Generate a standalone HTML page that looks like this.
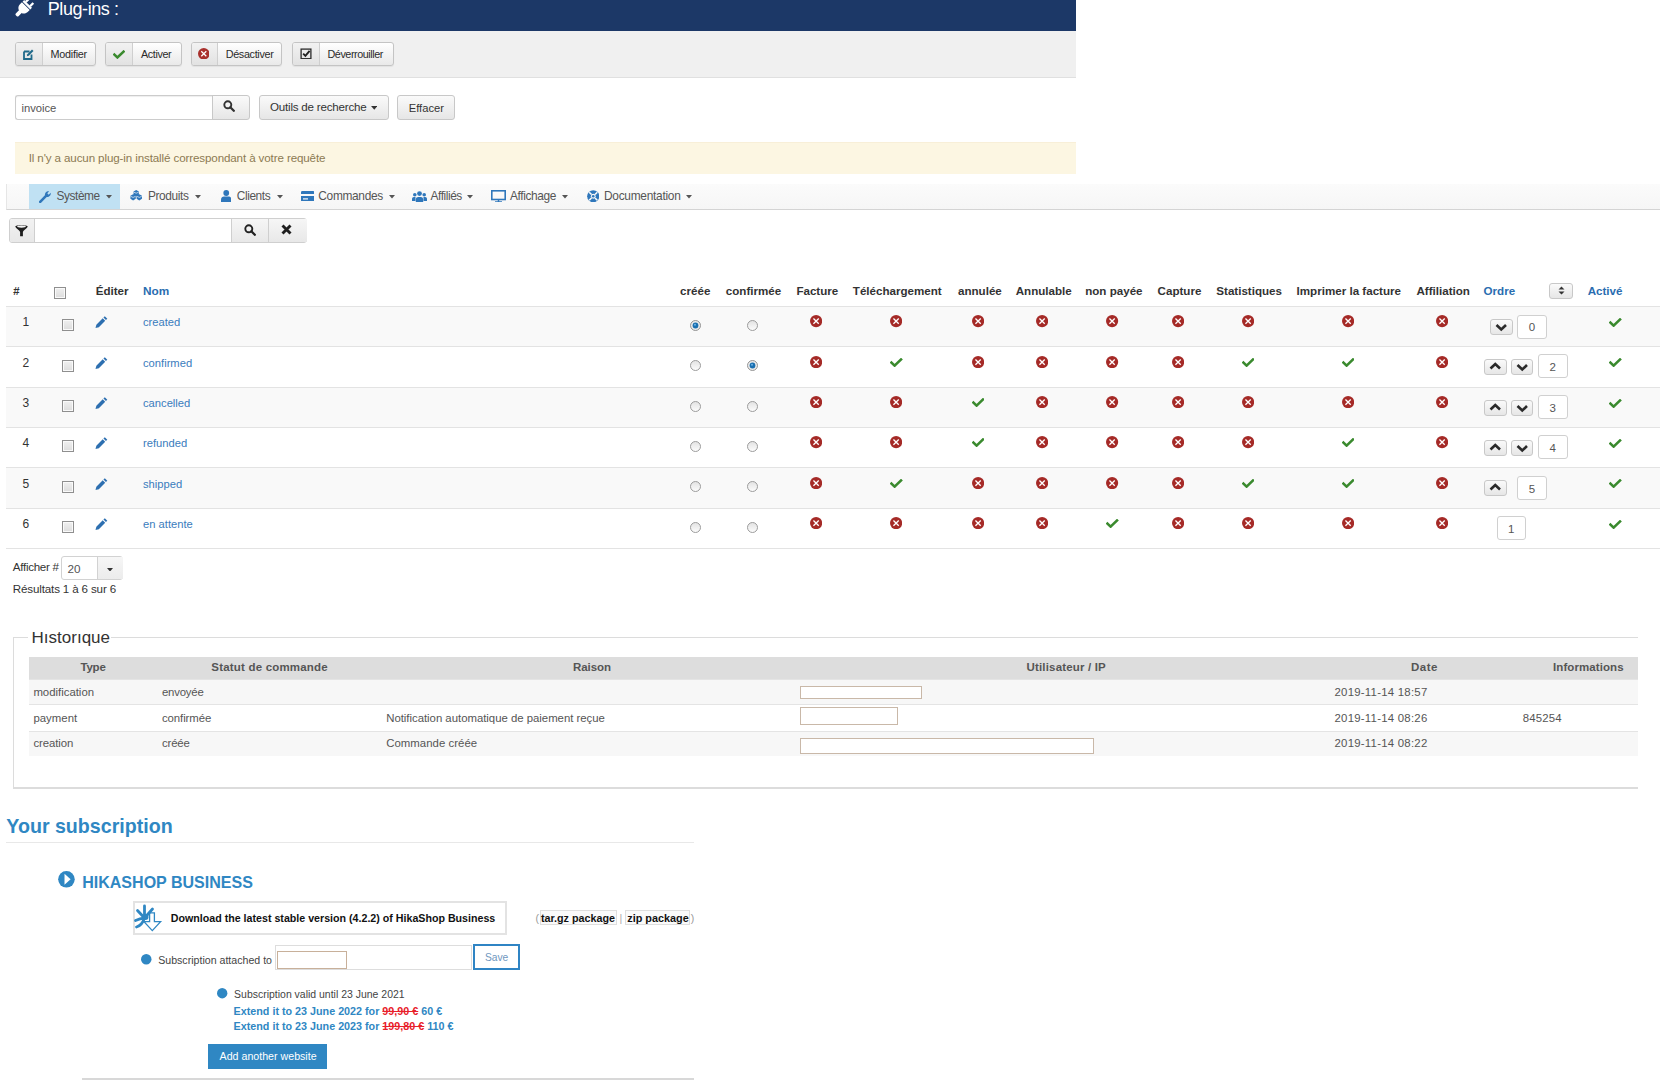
<!DOCTYPE html>
<html><head><meta charset="utf-8"><style>
html,body{margin:0;padding:0;background:#fff;width:1660px;height:1080px;overflow:hidden;position:relative}
body{font-family:"Liberation Sans",sans-serif}
.t{position:absolute;line-height:1;white-space:nowrap}
.b{position:absolute;display:block}
s{text-decoration:line-through}
</style></head><body>
<svg width="0" height="0" style="position:absolute"><defs><linearGradient id="rg" x1="0" y1="0" x2="0" y2="1"><stop offset="0" stop-color="#e2e2e2"/><stop offset="1" stop-color="#fdfdfd"/></linearGradient></defs></svg>
<div class="b" style="left:0.0px;top:0.0px;width:1076.0px;height:31.0px;background:#1c3867"></div>
<div class="b" style="left:0.0px;top:31.0px;width:1076.0px;height:47.0px;background:#f0f0f0;border-bottom:1px solid #e0e0e0;box-sizing:border-box"></div>
<div class="t" style="left:47.8px;top:0.0px;font-size:18px;color:#fff;letter-spacing:-0.429px;">Plug-ins :</div>
<svg class="b" style="left:0;top:0" width="40" height="30" viewBox="0 0 40 30"><g transform="translate(26.2,5.8) rotate(45)" fill="#fff"><rect x="-5.5" y="-2.6" width="11" height="2.2"/><rect x="-4.2" y="-7" width="2.3" height="4.6"/><rect x="1.9" y="-7" width="2.3" height="4.6"/><path d="M-5.5 0.5H5.5V3C5.5 6.8 2.8 8.6 0 8.6C-2.8 8.6 -5.5 6.8 -5.5 3Z"/><rect x="-1.9" y="7.5" width="3.8" height="6.5" rx="1.2"/></g></svg>
<div class="b" style="left:15.0px;top:42.0px;width:81.0px;height:24.0px;background:linear-gradient(#fff,#e9e9e9);border:1px solid #c4c4c4;border-radius:3px;box-sizing:border-box;box-shadow:0 1px 1px rgba(0,0,0,.06)"></div>
<div class="b" style="left:16.0px;top:43.0px;width:26.0px;height:22.0px;background:linear-gradient(#f2f2f2,#e2e2e2);border-right:1px solid #cfcfcf;border-radius:2px 0 0 2px"></div>
<div class="t" style="left:50.6px;top:49.0px;font-size:10.8px;color:#2b2b2b;letter-spacing:-0.256px;">Modifier</div>
<div class="b" style="left:105.0px;top:42.0px;width:76.5px;height:24.0px;background:linear-gradient(#fff,#e9e9e9);border:1px solid #c4c4c4;border-radius:3px;box-sizing:border-box;box-shadow:0 1px 1px rgba(0,0,0,.06)"></div>
<div class="b" style="left:106.0px;top:43.0px;width:25.6px;height:22.0px;background:linear-gradient(#f2f2f2,#e2e2e2);border-right:1px solid #cfcfcf;border-radius:2px 0 0 2px"></div>
<div class="t" style="left:141.0px;top:49.0px;font-size:10.8px;color:#2b2b2b;letter-spacing:-0.382px;">Activer</div>
<div class="b" style="left:191.0px;top:42.0px;width:91.0px;height:24.0px;background:linear-gradient(#fff,#e9e9e9);border:1px solid #c4c4c4;border-radius:3px;box-sizing:border-box;box-shadow:0 1px 1px rgba(0,0,0,.06)"></div>
<div class="b" style="left:192.0px;top:43.0px;width:25.0px;height:22.0px;background:linear-gradient(#f2f2f2,#e2e2e2);border-right:1px solid #cfcfcf;border-radius:2px 0 0 2px"></div>
<div class="t" style="left:225.7px;top:49.0px;font-size:10.8px;color:#2b2b2b;letter-spacing:-0.326px;">Désactiver</div>
<div class="b" style="left:292.0px;top:42.0px;width:101.5px;height:24.0px;background:linear-gradient(#fff,#e9e9e9);border:1px solid #c4c4c4;border-radius:3px;box-sizing:border-box;box-shadow:0 1px 1px rgba(0,0,0,.06)"></div>
<div class="b" style="left:293.0px;top:43.0px;width:25.5px;height:22.0px;background:linear-gradient(#f2f2f2,#e2e2e2);border-right:1px solid #cfcfcf;border-radius:2px 0 0 2px"></div>
<div class="t" style="left:327.5px;top:49.0px;font-size:10.8px;color:#2b2b2b;letter-spacing:-0.445px;">Déverrouiller</div>
<svg class="b" style="left:23.0px;top:48.5px;" width="11" height="11" viewBox="0 0 11 11"><path d="M1 2.5H6.5M1 2.5V10H8.5V5.5" fill="none" stroke="#206a8a" stroke-width="1.8"/><path d="M3.8 7.2L4.3 5.3L9 0.6L10.5 2.1L5.8 6.8Z" fill="#206a8a"/></svg>
<svg class="b" style="left:112.5px;top:49.5px;" width="12" height="9" viewBox="0 0 12.5 9"><path d="M1.5 4.6L4.6 7.6L11 1.5" fill="none" stroke="#3a8a2e" stroke-width="2.6" stroke-linejoin="miter" stroke-linecap="square"/></svg>
<svg class="b" style="left:197.8px;top:47.9px;" width="11.6" height="11.6" viewBox="0 0 12 12"><circle cx="6" cy="6" r="6" fill="#a8302c"/><path d="M3.4 3.4L8.6 8.6M8.6 3.4L3.4 8.6" stroke="#fff" stroke-width="1.3" stroke-linecap="butt"/></svg>
<svg class="b" style="left:299.5px;top:47.8px;" width="12" height="11.5" viewBox="0 0 12 11.5"><rect x="1.1" y="1.1" width="9.8" height="9.6" fill="none" stroke="#2a2a2a" stroke-width="1.3"/><path d="M3.2 5.6L5.4 7.8L9.6 2.8" fill="none" stroke="#222" stroke-width="1.9"/></svg>
<div class="b" style="left:15.0px;top:95.0px;width:198.0px;height:25.0px;background:#fff;border:1px solid #ccc;border-right:none;border-radius:3px 0 0 3px;box-sizing:border-box;box-shadow:inset 0 1px 1px rgba(0,0,0,.07)"></div>
<div class="t" style="left:21.4px;top:103.0px;font-size:11.24px;color:#555;">invoice</div>
<div class="b" style="left:212.0px;top:95.0px;width:37.6px;height:25.0px;background:linear-gradient(#fafafa,#e6e6e6);border:1px solid #c8c8c8;border-radius:3px;box-sizing:border-box;border-radius:0 3px 3px 0"></div>
<svg class="b" style="left:223.0px;top:100.3px;" width="12" height="12" viewBox="0 0 12 12"><circle cx="4.8" cy="4.8" r="3.5" fill="none" stroke="#333" stroke-width="1.9"/><path d="M7.3 7.3L10.8 10.8" stroke="#333" stroke-width="2.3" stroke-linecap="round"/></svg>
<div class="b" style="left:258.6px;top:94.5px;width:130.1px;height:25.0px;background:linear-gradient(#fafafa,#e6e6e6);border:1px solid #c8c8c8;border-radius:3px;box-sizing:border-box"></div>
<div class="t" style="left:270.0px;top:101.0px;font-size:11.6px;color:#333;letter-spacing:-0.215px;">Outils de recherche</div>
<svg class="b" style="left:370.5px;top:106.0px;" width="6.5" height="3.75" viewBox="0 0 6 3.5"><path d="M0 0H6L3 3.5Z" fill="#333"/></svg>
<div class="b" style="left:397.3px;top:95.0px;width:57.3px;height:24.5px;background:linear-gradient(#fafafa,#e6e6e6);border:1px solid #c8c8c8;border-radius:3px;box-sizing:border-box"></div>
<div class="t" style="left:408.7px;top:103.0px;font-size:11.2px;color:#333;">Effacer</div>
<div class="b" style="left:15.0px;top:142.0px;width:1061.0px;height:31.5px;background:#fcf6e2;border-top:1px solid #f8efd8;box-sizing:border-box"></div>
<div class="t" style="left:28.7px;top:152.0px;font-size:11.6px;color:#8c7a52;letter-spacing:-0.117px;">Il n'y a aucun plug-in installé correspondant à votre requête</div>
<div class="b" style="left:6.0px;top:183.5px;width:1654.0px;height:26.5px;background:linear-gradient(#fbfbfb,#f6f6f6);border-bottom:1px solid #d4d4d4;border-left:1px solid #e6e6e6;box-sizing:border-box"></div>
<div class="b" style="left:29.0px;top:184.0px;width:91.0px;height:25.0px;background:#c0e1f3"></div>
<div class="t" style="left:56.5px;top:191.0px;font-size:11.9px;color:#555;letter-spacing:-0.432px;">Système</div>
<svg class="b" style="left:105.5px;top:195.2px;" width="6" height="3.5" viewBox="0 0 6 3.5"><path d="M0 0H6L3 3.5Z" fill="#555"/></svg>
<div class="t" style="left:148.0px;top:191.0px;font-size:11.9px;color:#555;letter-spacing:-0.396px;">Produits</div>
<svg class="b" style="left:195.0px;top:195.2px;" width="6" height="3.5" viewBox="0 0 6 3.5"><path d="M0 0H6L3 3.5Z" fill="#555"/></svg>
<div class="t" style="left:236.8px;top:191.0px;font-size:11.9px;color:#555;letter-spacing:-0.426px;">Clients</div>
<svg class="b" style="left:276.5px;top:195.2px;" width="6" height="3.5" viewBox="0 0 6 3.5"><path d="M0 0H6L3 3.5Z" fill="#555"/></svg>
<div class="t" style="left:318.3px;top:191.0px;font-size:11.9px;color:#555;letter-spacing:-0.309px;">Commandes</div>
<svg class="b" style="left:389.0px;top:195.2px;" width="6" height="3.5" viewBox="0 0 6 3.5"><path d="M0 0H6L3 3.5Z" fill="#555"/></svg>
<div class="t" style="left:430.6px;top:191.0px;font-size:11.9px;color:#555;letter-spacing:-0.444px;">Affiliés</div>
<svg class="b" style="left:467.2px;top:195.2px;" width="6" height="3.5" viewBox="0 0 6 3.5"><path d="M0 0H6L3 3.5Z" fill="#555"/></svg>
<div class="t" style="left:510.0px;top:191.0px;font-size:11.9px;color:#555;letter-spacing:-0.373px;">Affichage</div>
<svg class="b" style="left:562.0px;top:195.2px;" width="6" height="3.5" viewBox="0 0 6 3.5"><path d="M0 0H6L3 3.5Z" fill="#555"/></svg>
<div class="t" style="left:604.0px;top:191.0px;font-size:11.9px;color:#555;letter-spacing:-0.269px;">Documentation</div>
<svg class="b" style="left:686.2px;top:195.2px;" width="6" height="3.5" viewBox="0 0 6 3.5"><path d="M0 0H6L3 3.5Z" fill="#555"/></svg>
<svg class="b" style="left:38.5px;top:189.5px;" width="13" height="13" viewBox="0 0 13 13"><path d="M1.2 11.8L6.8 6.2" stroke="#2f77bb" stroke-width="2.6" stroke-linecap="round"/><path d="M6 5.5C5.5 3.2 7.5 0.8 10.2 1.3L8.3 3.3L9.7 4.7L11.7 2.8C12.2 5.5 9.8 7.5 7.5 7Z" fill="#2f77bb"/></svg>
<svg class="b" style="left:130.3px;top:190.4px;" width="12.4" height="10.8" viewBox="0 0 12.4 10.8"><g fill="#2f77bb"><path d="M8.88 4.65 L6.20 6.20 L3.52 4.65 L3.52 1.55 L6.20 0.00 L8.88 1.55ZM5.78 8.85 L3.10 10.40 L0.42 8.85 L0.42 5.75 L3.10 4.20 L5.78 5.75ZM11.98 8.85 L9.30 10.40 L6.62 8.85 L6.62 5.75 L9.30 4.20 L11.98 5.75Z"/></g><g stroke="#f2f6fa" stroke-width="0.7" fill="none"><path d="M3.8 2.2L6.2 3.2L8.6 2.2M0.7 6.4L3.1 7.4L5.5 6.4M6.9 6.4L9.3 7.4L11.7 6.4"/></g></svg>
<svg class="b" style="left:220.5px;top:190.0px;" width="10.5" height="12" viewBox="0 0 10.5 12"><circle cx="5.25" cy="3" r="2.9" fill="#2f77bb"/><path d="M0 12V9.5C0 7.5 1.5 6.5 3 6.5H7.5C9 6.5 10.5 7.5 10.5 9.5V12Z" fill="#2f77bb"/></svg>
<svg class="b" style="left:300.5px;top:190.5px;" width="13.5" height="10.5" viewBox="0 0 13.5 10.5"><rect x="0" y="0" width="13.5" height="10.5" rx="1.3" fill="#2f77bb"/><rect x="0" y="3" width="13.5" height="2" fill="#f9f9f9"/><rect x="2" y="7.3" width="5" height="1.2" fill="#f9f9f9"/></svg>
<svg class="b" style="left:412.0px;top:190.5px;" width="15" height="11" viewBox="0 0 15 11"><g fill="#2f77bb"><circle cx="7.5" cy="2.6" r="2.4"/><path d="M3.8 11V8.5C3.8 6.8 5 6 6.2 6H8.8C10 6 11.2 6.8 11.2 8.5V11Z"/><circle cx="2.8" cy="3.8" r="1.8"/><path d="M0 10V8C0 6.7 0.8 6 1.8 6H3.5V10Z"/><circle cx="12.2" cy="3.8" r="1.8"/><path d="M15 10V8C15 6.7 14.2 6 13.2 6H11.5V10Z"/></g></svg>
<svg class="b" style="left:491.0px;top:189.5px;" width="15" height="12.5" viewBox="0 0 15 12.5"><rect x="0.8" y="0.8" width="13.4" height="8.7" fill="none" stroke="#2f77bb" stroke-width="1.6"/><path d="M4 12H11" stroke="#2f77bb" stroke-width="1.5"/><path d="M7.5 9.5V12" stroke="#2f77bb" stroke-width="1.5"/></svg>
<svg class="b" style="left:586.5px;top:189.8px;" width="12.5" height="12.5" viewBox="0 0 12.5 12.5"><circle cx="6.25" cy="6.25" r="6.1" fill="#2f77bb"/><circle cx="6.25" cy="6.25" r="2.4" fill="#f9f9f9"/><path d="M2.2 2.2L4.5 4.5M10.3 2.2L8 4.5M2.2 10.3L4.5 8M10.3 10.3L8 8" stroke="#f9f9f9" stroke-width="1.6"/><circle cx="6.25" cy="6.25" r="1.3" fill="#2f77bb"/></svg>
<div class="b" style="left:9.0px;top:218.0px;width:298.0px;height:25.0px;border:1px solid #cfcfcf;border-radius:3px;box-sizing:border-box;background:#fff"></div>
<div class="b" style="left:10.0px;top:219.0px;width:24.2px;height:23.0px;background:linear-gradient(#f2f2f2,#e8e8e8);border-right:1px solid #cfcfcf;border-radius:2px 0 0 2px"></div>
<svg class="b" style="left:14.5px;top:223.5px;" width="13" height="13" viewBox="0 0 13 13"><path d="M0.3 2.6C0.3 0.9 12.7 0.9 12.7 2.6C12.7 3.6 8 7 7.9 8V12.2H5.1V8C5 7 0.3 3.6 0.3 2.6Z" fill="#1e1e1e"/><ellipse cx="6.5" cy="2.6" rx="4.3" ry="1.1" fill="#f4f4f4"/></svg>
<div class="b" style="left:230.7px;top:219.0px;width:75.3px;height:23.0px;background:linear-gradient(#f6f6f6,#e8e8e8);border-left:1px solid #cfcfcf"></div>
<div class="b" style="left:268.0px;top:219.0px;width:1.0px;height:23.0px;background:#cfcfcf"></div>
<svg class="b" style="left:243.5px;top:224.0px;" width="12" height="12" viewBox="0 0 12 12"><circle cx="4.8" cy="4.8" r="3.5" fill="none" stroke="#222" stroke-width="1.9"/><path d="M7.3 7.3L10.8 10.8" stroke="#222" stroke-width="2.3" stroke-linecap="round"/></svg>
<svg class="b" style="left:280.5px;top:224.0px;" width="11" height="11" viewBox="0 0 11 11"><path d="M1.5 1.5L9.5 9.5M9.5 1.5L1.5 9.5" stroke="#1e1e1e" stroke-width="2.9"/></svg>
<div class="t" style="left:13.0px;top:286.0px;font-size:11.5px;color:#333;font-weight:bold;font-style:italic">#</div>
<div class="b" style="left:54.0px;top:287.2px;width:12.0px;height:12.0px;border:1px solid #8f8f8f;background:linear-gradient(#f0f0f0,#dcdcdc);box-sizing:border-box;box-shadow:inset 0 0 0 1px #fafafa"></div>
<div class="t" style="left:95.7px;top:285.0px;font-size:11.6px;color:#333;font-weight:bold;">Éditer</div>
<div class="t" style="left:143.0px;top:286.0px;font-size:11.8px;color:#2a6db0;font-weight:bold;">Nom</div>
<div class="t" style="left:680.1px;top:285.0px;font-size:11.6px;color:#333;font-weight:bold;">créée</div>
<div class="t" style="left:725.8px;top:285.0px;font-size:11.6px;color:#333;font-weight:bold;">confirmée</div>
<div class="t" style="left:796.4px;top:285.0px;font-size:11.6px;color:#333;font-weight:bold;">Facture</div>
<div class="t" style="left:852.8px;top:285.0px;font-size:11.6px;color:#333;font-weight:bold;">Téléchargement</div>
<div class="t" style="left:958.0px;top:285.0px;font-size:11.6px;color:#333;font-weight:bold;">annulée</div>
<div class="t" style="left:1015.7px;top:285.0px;font-size:11.6px;color:#333;font-weight:bold;">Annulable</div>
<div class="t" style="left:1085.2px;top:285.0px;font-size:11.6px;color:#333;font-weight:bold;">non payée</div>
<div class="t" style="left:1157.6px;top:285.0px;font-size:11.6px;color:#333;font-weight:bold;">Capture</div>
<div class="t" style="left:1216.3px;top:285.0px;font-size:11.6px;color:#333;font-weight:bold;">Statistiques</div>
<div class="t" style="left:1296.6px;top:285.0px;font-size:11.6px;color:#333;font-weight:bold;">Imprimer la facture</div>
<div class="t" style="left:1416.5px;top:285.0px;font-size:11.6px;color:#333;font-weight:bold;">Affiliation</div>
<div class="t" style="left:1483.6px;top:285.0px;font-size:11.6px;color:#2a6db0;font-weight:bold;">Ordre</div>
<div class="t" style="left:1587.7px;top:285.0px;font-size:11.6px;color:#2a6db0;font-weight:bold;">Activé</div>
<div class="b" style="left:1549.0px;top:283.0px;width:24.0px;height:15.5px;background:linear-gradient(#fafafa,#e6e6e6);border:1px solid #c8c8c8;border-radius:3px;box-sizing:border-box"></div>
<svg class="b" style="left:1557.5px;top:286.0px;" width="7" height="9" viewBox="0 0 7 9"><path d="M0.5 3.5L3.5 0.5L6.5 3.5ZM0.5 5.5L3.5 8.5L6.5 5.5Z" fill="#333"/></svg>
<div class="b" style="left:6.0px;top:306.0px;width:1654.0px;height:40.0px;background:#f9f9f9;border-top:1px solid #e3e3e3;box-sizing:border-box"></div>
<div class="t" style="left:-274.2px;width:600px;text-align:center;top:316.0px;font-size:12px;color:#333;">1</div>
<div class="b" style="left:62.0px;top:319.3px;width:12.0px;height:12.0px;border:1px solid #8f8f8f;background:linear-gradient(#f0f0f0,#dcdcdc);box-sizing:border-box;box-shadow:inset 0 0 0 1px #fafafa"></div>
<svg class="b" style="left:95.0px;top:316.3px;" width="12.5" height="12.5" viewBox="0 0 12 12"><path d="M0.5 11.5L1.3 8.3L7.4 2.2L9.8 4.6L3.7 10.7Z" fill="#2d6fb0"/><path d="M8.1 1.5L9.4 0.2L11.8 2.6L10.5 3.9Z" fill="#2d6fb0"/></svg>
<div class="t" style="left:143.0px;top:317.0px;font-size:11.2px;color:#3a7cbd;">created</div>
<svg class="b" style="left:689.9px;top:319.9px;" width="11" height="11" viewBox="0 0 11 11"><circle cx="5.5" cy="5.5" r="5" fill="#eaeaea" stroke="#8a8a8a" stroke-width="0.9"/><circle cx="5.5" cy="5.5" r="2.9" fill="#1a6fb0"/><circle cx="5" cy="4.8" r="1" fill="#6fb4e6"/></svg>
<svg class="b" style="left:747.0px;top:319.9px;" width="11" height="11" viewBox="0 0 11 11"><circle cx="5.5" cy="5.5" r="5" fill="url(#rg)" stroke="#9c9c9c" stroke-width="1"/></svg>
<svg class="b" style="left:809.7px;top:315.4px;" width="12.2" height="12.2" viewBox="0 0 12 12"><circle cx="6" cy="6" r="6" fill="#a52a27"/><path d="M3.4 3.4L8.6 8.6M8.6 3.4L3.4 8.6" stroke="#fff" stroke-width="1.3" stroke-linecap="butt"/></svg>
<svg class="b" style="left:890.1px;top:315.4px;" width="12.2" height="12.2" viewBox="0 0 12 12"><circle cx="6" cy="6" r="6" fill="#a52a27"/><path d="M3.4 3.4L8.6 8.6M8.6 3.4L3.4 8.6" stroke="#fff" stroke-width="1.3" stroke-linecap="butt"/></svg>
<svg class="b" style="left:972.0px;top:315.4px;" width="12.2" height="12.2" viewBox="0 0 12 12"><circle cx="6" cy="6" r="6" fill="#a52a27"/><path d="M3.4 3.4L8.6 8.6M8.6 3.4L3.4 8.6" stroke="#fff" stroke-width="1.3" stroke-linecap="butt"/></svg>
<svg class="b" style="left:1035.6px;top:315.4px;" width="12.2" height="12.2" viewBox="0 0 12 12"><circle cx="6" cy="6" r="6" fill="#a52a27"/><path d="M3.4 3.4L8.6 8.6M8.6 3.4L3.4 8.6" stroke="#fff" stroke-width="1.3" stroke-linecap="butt"/></svg>
<svg class="b" style="left:1106.4px;top:315.4px;" width="12.2" height="12.2" viewBox="0 0 12 12"><circle cx="6" cy="6" r="6" fill="#a52a27"/><path d="M3.4 3.4L8.6 8.6M8.6 3.4L3.4 8.6" stroke="#fff" stroke-width="1.3" stroke-linecap="butt"/></svg>
<svg class="b" style="left:1171.7px;top:315.4px;" width="12.2" height="12.2" viewBox="0 0 12 12"><circle cx="6" cy="6" r="6" fill="#a52a27"/><path d="M3.4 3.4L8.6 8.6M8.6 3.4L3.4 8.6" stroke="#fff" stroke-width="1.3" stroke-linecap="butt"/></svg>
<svg class="b" style="left:1241.6px;top:315.4px;" width="12.2" height="12.2" viewBox="0 0 12 12"><circle cx="6" cy="6" r="6" fill="#a52a27"/><path d="M3.4 3.4L8.6 8.6M8.6 3.4L3.4 8.6" stroke="#fff" stroke-width="1.3" stroke-linecap="butt"/></svg>
<svg class="b" style="left:1341.9px;top:315.4px;" width="12.2" height="12.2" viewBox="0 0 12 12"><circle cx="6" cy="6" r="6" fill="#a52a27"/><path d="M3.4 3.4L8.6 8.6M8.6 3.4L3.4 8.6" stroke="#fff" stroke-width="1.3" stroke-linecap="butt"/></svg>
<svg class="b" style="left:1435.5px;top:315.4px;" width="12.2" height="12.2" viewBox="0 0 12 12"><circle cx="6" cy="6" r="6" fill="#a52a27"/><path d="M3.4 3.4L8.6 8.6M8.6 3.4L3.4 8.6" stroke="#fff" stroke-width="1.3" stroke-linecap="butt"/></svg>
<svg class="b" style="left:1609.0px;top:318.0px;" width="12.5" height="9" viewBox="0 0 12.5 9"><path d="M1.5 4.6L4.6 7.6L11 1.5" fill="none" stroke="#3a8a2e" stroke-width="2.6" stroke-linejoin="miter" stroke-linecap="square"/></svg>
<div class="b" style="left:1490.2px;top:318.5px;width:22.5px;height:16.0px;background:linear-gradient(#fafafa,#e6e6e6);border:1px solid #c8c8c8;border-radius:3px;box-sizing:border-box"></div>
<svg class="b" style="left:1490.2px;top:318.5px;" width="22.5" height="16" viewBox="0 0 22.5 16"><path d="M6.5 6L11.25 10.5L16 6" fill="none" stroke="#2a2a2a" stroke-width="2.6"/></svg>
<div class="b" style="left:1517.3px;top:314.5px;width:29.5px;height:24.0px;background:#fff;border:1px solid #d0d0d0;border-radius:3px;box-sizing:border-box"></div>
<div class="t" style="left:1232.0px;width:600px;text-align:center;top:322.0px;font-size:11.5px;color:#555;">0</div>
<div class="b" style="left:6.0px;top:346.0px;width:1654.0px;height:41.0px;background:#fff;border-top:1px solid #e3e3e3;box-sizing:border-box"></div>
<div class="t" style="left:-274.2px;width:600px;text-align:center;top:357.0px;font-size:12px;color:#333;">2</div>
<div class="b" style="left:62.0px;top:359.6px;width:12.0px;height:12.0px;border:1px solid #8f8f8f;background:linear-gradient(#f0f0f0,#dcdcdc);box-sizing:border-box;box-shadow:inset 0 0 0 1px #fafafa"></div>
<svg class="b" style="left:95.0px;top:356.6px;" width="12.5" height="12.5" viewBox="0 0 12 12"><path d="M0.5 11.5L1.3 8.3L7.4 2.2L9.8 4.6L3.7 10.7Z" fill="#2d6fb0"/><path d="M8.1 1.5L9.4 0.2L11.8 2.6L10.5 3.9Z" fill="#2d6fb0"/></svg>
<div class="t" style="left:143.0px;top:358.0px;font-size:11.2px;color:#3a7cbd;">confirmed</div>
<svg class="b" style="left:689.9px;top:360.2px;" width="11" height="11" viewBox="0 0 11 11"><circle cx="5.5" cy="5.5" r="5" fill="url(#rg)" stroke="#9c9c9c" stroke-width="1"/></svg>
<svg class="b" style="left:747.0px;top:360.2px;" width="11" height="11" viewBox="0 0 11 11"><circle cx="5.5" cy="5.5" r="5" fill="#eaeaea" stroke="#8a8a8a" stroke-width="0.9"/><circle cx="5.5" cy="5.5" r="2.9" fill="#1a6fb0"/><circle cx="5" cy="4.8" r="1" fill="#6fb4e6"/></svg>
<svg class="b" style="left:809.7px;top:355.7px;" width="12.2" height="12.2" viewBox="0 0 12 12"><circle cx="6" cy="6" r="6" fill="#a52a27"/><path d="M3.4 3.4L8.6 8.6M8.6 3.4L3.4 8.6" stroke="#fff" stroke-width="1.3" stroke-linecap="butt"/></svg>
<svg class="b" style="left:890.0px;top:357.5px;" width="12.5" height="9" viewBox="0 0 12.5 9"><path d="M1.5 4.6L4.6 7.6L11 1.5" fill="none" stroke="#3a8a2e" stroke-width="2.6" stroke-linejoin="miter" stroke-linecap="square"/></svg>
<svg class="b" style="left:972.0px;top:355.7px;" width="12.2" height="12.2" viewBox="0 0 12 12"><circle cx="6" cy="6" r="6" fill="#a52a27"/><path d="M3.4 3.4L8.6 8.6M8.6 3.4L3.4 8.6" stroke="#fff" stroke-width="1.3" stroke-linecap="butt"/></svg>
<svg class="b" style="left:1035.6px;top:355.7px;" width="12.2" height="12.2" viewBox="0 0 12 12"><circle cx="6" cy="6" r="6" fill="#a52a27"/><path d="M3.4 3.4L8.6 8.6M8.6 3.4L3.4 8.6" stroke="#fff" stroke-width="1.3" stroke-linecap="butt"/></svg>
<svg class="b" style="left:1106.4px;top:355.7px;" width="12.2" height="12.2" viewBox="0 0 12 12"><circle cx="6" cy="6" r="6" fill="#a52a27"/><path d="M3.4 3.4L8.6 8.6M8.6 3.4L3.4 8.6" stroke="#fff" stroke-width="1.3" stroke-linecap="butt"/></svg>
<svg class="b" style="left:1171.7px;top:355.7px;" width="12.2" height="12.2" viewBox="0 0 12 12"><circle cx="6" cy="6" r="6" fill="#a52a27"/><path d="M3.4 3.4L8.6 8.6M8.6 3.4L3.4 8.6" stroke="#fff" stroke-width="1.3" stroke-linecap="butt"/></svg>
<svg class="b" style="left:1241.5px;top:357.5px;" width="12.5" height="9" viewBox="0 0 12.5 9"><path d="M1.5 4.6L4.6 7.6L11 1.5" fill="none" stroke="#3a8a2e" stroke-width="2.6" stroke-linejoin="miter" stroke-linecap="square"/></svg>
<svg class="b" style="left:1341.8px;top:357.5px;" width="12.5" height="9" viewBox="0 0 12.5 9"><path d="M1.5 4.6L4.6 7.6L11 1.5" fill="none" stroke="#3a8a2e" stroke-width="2.6" stroke-linejoin="miter" stroke-linecap="square"/></svg>
<svg class="b" style="left:1435.5px;top:355.7px;" width="12.2" height="12.2" viewBox="0 0 12 12"><circle cx="6" cy="6" r="6" fill="#a52a27"/><path d="M3.4 3.4L8.6 8.6M8.6 3.4L3.4 8.6" stroke="#fff" stroke-width="1.3" stroke-linecap="butt"/></svg>
<svg class="b" style="left:1609.0px;top:358.3px;" width="12.5" height="9" viewBox="0 0 12.5 9"><path d="M1.5 4.6L4.6 7.6L11 1.5" fill="none" stroke="#3a8a2e" stroke-width="2.6" stroke-linejoin="miter" stroke-linecap="square"/></svg>
<div class="b" style="left:1484.0px;top:359.4px;width:22.5px;height:16.0px;background:linear-gradient(#fafafa,#e6e6e6);border:1px solid #c8c8c8;border-radius:3px;box-sizing:border-box"></div>
<svg class="b" style="left:1484.0px;top:359.4px;" width="22.5" height="16" viewBox="0 0 22.5 16"><path d="M6.5 9.5L11.25 5L16 9.5" fill="none" stroke="#2a2a2a" stroke-width="2.6"/></svg>
<div class="b" style="left:1510.9px;top:359.4px;width:22.5px;height:16.0px;background:linear-gradient(#fafafa,#e6e6e6);border:1px solid #c8c8c8;border-radius:3px;box-sizing:border-box"></div>
<svg class="b" style="left:1510.9px;top:359.4px;" width="22.5" height="16" viewBox="0 0 22.5 16"><path d="M6.5 6L11.25 10.5L16 6" fill="none" stroke="#2a2a2a" stroke-width="2.6"/></svg>
<div class="b" style="left:1538.1px;top:354.3px;width:29.5px;height:24.0px;background:#fff;border:1px solid #d0d0d0;border-radius:3px;box-sizing:border-box"></div>
<div class="t" style="left:1252.8px;width:600px;text-align:center;top:362.0px;font-size:11.5px;color:#555;">2</div>
<div class="b" style="left:6.0px;top:387.0px;width:1654.0px;height:40.0px;background:#f9f9f9;border-top:1px solid #e3e3e3;box-sizing:border-box"></div>
<div class="t" style="left:-274.2px;width:600px;text-align:center;top:397.0px;font-size:12px;color:#333;">3</div>
<div class="b" style="left:62.0px;top:400.0px;width:12.0px;height:12.0px;border:1px solid #8f8f8f;background:linear-gradient(#f0f0f0,#dcdcdc);box-sizing:border-box;box-shadow:inset 0 0 0 1px #fafafa"></div>
<svg class="b" style="left:95.0px;top:397.0px;" width="12.5" height="12.5" viewBox="0 0 12 12"><path d="M0.5 11.5L1.3 8.3L7.4 2.2L9.8 4.6L3.7 10.7Z" fill="#2d6fb0"/><path d="M8.1 1.5L9.4 0.2L11.8 2.6L10.5 3.9Z" fill="#2d6fb0"/></svg>
<div class="t" style="left:143.0px;top:398.0px;font-size:11.2px;color:#3a7cbd;">cancelled</div>
<svg class="b" style="left:689.9px;top:400.6px;" width="11" height="11" viewBox="0 0 11 11"><circle cx="5.5" cy="5.5" r="5" fill="url(#rg)" stroke="#9c9c9c" stroke-width="1"/></svg>
<svg class="b" style="left:747.0px;top:400.6px;" width="11" height="11" viewBox="0 0 11 11"><circle cx="5.5" cy="5.5" r="5" fill="url(#rg)" stroke="#9c9c9c" stroke-width="1"/></svg>
<svg class="b" style="left:809.7px;top:396.1px;" width="12.2" height="12.2" viewBox="0 0 12 12"><circle cx="6" cy="6" r="6" fill="#a52a27"/><path d="M3.4 3.4L8.6 8.6M8.6 3.4L3.4 8.6" stroke="#fff" stroke-width="1.3" stroke-linecap="butt"/></svg>
<svg class="b" style="left:890.1px;top:396.1px;" width="12.2" height="12.2" viewBox="0 0 12 12"><circle cx="6" cy="6" r="6" fill="#a52a27"/><path d="M3.4 3.4L8.6 8.6M8.6 3.4L3.4 8.6" stroke="#fff" stroke-width="1.3" stroke-linecap="butt"/></svg>
<svg class="b" style="left:971.9px;top:397.9px;" width="12.5" height="9" viewBox="0 0 12.5 9"><path d="M1.5 4.6L4.6 7.6L11 1.5" fill="none" stroke="#3a8a2e" stroke-width="2.6" stroke-linejoin="miter" stroke-linecap="square"/></svg>
<svg class="b" style="left:1035.6px;top:396.1px;" width="12.2" height="12.2" viewBox="0 0 12 12"><circle cx="6" cy="6" r="6" fill="#a52a27"/><path d="M3.4 3.4L8.6 8.6M8.6 3.4L3.4 8.6" stroke="#fff" stroke-width="1.3" stroke-linecap="butt"/></svg>
<svg class="b" style="left:1106.4px;top:396.1px;" width="12.2" height="12.2" viewBox="0 0 12 12"><circle cx="6" cy="6" r="6" fill="#a52a27"/><path d="M3.4 3.4L8.6 8.6M8.6 3.4L3.4 8.6" stroke="#fff" stroke-width="1.3" stroke-linecap="butt"/></svg>
<svg class="b" style="left:1171.7px;top:396.1px;" width="12.2" height="12.2" viewBox="0 0 12 12"><circle cx="6" cy="6" r="6" fill="#a52a27"/><path d="M3.4 3.4L8.6 8.6M8.6 3.4L3.4 8.6" stroke="#fff" stroke-width="1.3" stroke-linecap="butt"/></svg>
<svg class="b" style="left:1241.6px;top:396.1px;" width="12.2" height="12.2" viewBox="0 0 12 12"><circle cx="6" cy="6" r="6" fill="#a52a27"/><path d="M3.4 3.4L8.6 8.6M8.6 3.4L3.4 8.6" stroke="#fff" stroke-width="1.3" stroke-linecap="butt"/></svg>
<svg class="b" style="left:1341.9px;top:396.1px;" width="12.2" height="12.2" viewBox="0 0 12 12"><circle cx="6" cy="6" r="6" fill="#a52a27"/><path d="M3.4 3.4L8.6 8.6M8.6 3.4L3.4 8.6" stroke="#fff" stroke-width="1.3" stroke-linecap="butt"/></svg>
<svg class="b" style="left:1435.5px;top:396.1px;" width="12.2" height="12.2" viewBox="0 0 12 12"><circle cx="6" cy="6" r="6" fill="#a52a27"/><path d="M3.4 3.4L8.6 8.6M8.6 3.4L3.4 8.6" stroke="#fff" stroke-width="1.3" stroke-linecap="butt"/></svg>
<svg class="b" style="left:1609.0px;top:398.7px;" width="12.5" height="9" viewBox="0 0 12.5 9"><path d="M1.5 4.6L4.6 7.6L11 1.5" fill="none" stroke="#3a8a2e" stroke-width="2.6" stroke-linejoin="miter" stroke-linecap="square"/></svg>
<div class="b" style="left:1484.0px;top:399.8px;width:22.5px;height:16.0px;background:linear-gradient(#fafafa,#e6e6e6);border:1px solid #c8c8c8;border-radius:3px;box-sizing:border-box"></div>
<svg class="b" style="left:1484.0px;top:399.8px;" width="22.5" height="16" viewBox="0 0 22.5 16"><path d="M6.5 9.5L11.25 5L16 9.5" fill="none" stroke="#2a2a2a" stroke-width="2.6"/></svg>
<div class="b" style="left:1510.9px;top:399.8px;width:22.5px;height:16.0px;background:linear-gradient(#fafafa,#e6e6e6);border:1px solid #c8c8c8;border-radius:3px;box-sizing:border-box"></div>
<svg class="b" style="left:1510.9px;top:399.8px;" width="22.5" height="16" viewBox="0 0 22.5 16"><path d="M6.5 6L11.25 10.5L16 6" fill="none" stroke="#2a2a2a" stroke-width="2.6"/></svg>
<div class="b" style="left:1538.1px;top:394.7px;width:29.5px;height:24.0px;background:#fff;border:1px solid #d0d0d0;border-radius:3px;box-sizing:border-box"></div>
<div class="t" style="left:1252.8px;width:600px;text-align:center;top:403.0px;font-size:11.5px;color:#555;">3</div>
<div class="b" style="left:6.0px;top:427.0px;width:1654.0px;height:40.0px;background:#fff;border-top:1px solid #e3e3e3;box-sizing:border-box"></div>
<div class="t" style="left:-274.2px;width:600px;text-align:center;top:437.0px;font-size:12px;color:#333;">4</div>
<div class="b" style="left:62.0px;top:440.3px;width:12.0px;height:12.0px;border:1px solid #8f8f8f;background:linear-gradient(#f0f0f0,#dcdcdc);box-sizing:border-box;box-shadow:inset 0 0 0 1px #fafafa"></div>
<svg class="b" style="left:95.0px;top:437.3px;" width="12.5" height="12.5" viewBox="0 0 12 12"><path d="M0.5 11.5L1.3 8.3L7.4 2.2L9.8 4.6L3.7 10.7Z" fill="#2d6fb0"/><path d="M8.1 1.5L9.4 0.2L11.8 2.6L10.5 3.9Z" fill="#2d6fb0"/></svg>
<div class="t" style="left:143.0px;top:438.0px;font-size:11.2px;color:#3a7cbd;">refunded</div>
<svg class="b" style="left:689.9px;top:440.9px;" width="11" height="11" viewBox="0 0 11 11"><circle cx="5.5" cy="5.5" r="5" fill="url(#rg)" stroke="#9c9c9c" stroke-width="1"/></svg>
<svg class="b" style="left:747.0px;top:440.9px;" width="11" height="11" viewBox="0 0 11 11"><circle cx="5.5" cy="5.5" r="5" fill="url(#rg)" stroke="#9c9c9c" stroke-width="1"/></svg>
<svg class="b" style="left:809.7px;top:436.4px;" width="12.2" height="12.2" viewBox="0 0 12 12"><circle cx="6" cy="6" r="6" fill="#a52a27"/><path d="M3.4 3.4L8.6 8.6M8.6 3.4L3.4 8.6" stroke="#fff" stroke-width="1.3" stroke-linecap="butt"/></svg>
<svg class="b" style="left:890.1px;top:436.4px;" width="12.2" height="12.2" viewBox="0 0 12 12"><circle cx="6" cy="6" r="6" fill="#a52a27"/><path d="M3.4 3.4L8.6 8.6M8.6 3.4L3.4 8.6" stroke="#fff" stroke-width="1.3" stroke-linecap="butt"/></svg>
<svg class="b" style="left:971.9px;top:438.2px;" width="12.5" height="9" viewBox="0 0 12.5 9"><path d="M1.5 4.6L4.6 7.6L11 1.5" fill="none" stroke="#3a8a2e" stroke-width="2.6" stroke-linejoin="miter" stroke-linecap="square"/></svg>
<svg class="b" style="left:1035.6px;top:436.4px;" width="12.2" height="12.2" viewBox="0 0 12 12"><circle cx="6" cy="6" r="6" fill="#a52a27"/><path d="M3.4 3.4L8.6 8.6M8.6 3.4L3.4 8.6" stroke="#fff" stroke-width="1.3" stroke-linecap="butt"/></svg>
<svg class="b" style="left:1106.4px;top:436.4px;" width="12.2" height="12.2" viewBox="0 0 12 12"><circle cx="6" cy="6" r="6" fill="#a52a27"/><path d="M3.4 3.4L8.6 8.6M8.6 3.4L3.4 8.6" stroke="#fff" stroke-width="1.3" stroke-linecap="butt"/></svg>
<svg class="b" style="left:1171.7px;top:436.4px;" width="12.2" height="12.2" viewBox="0 0 12 12"><circle cx="6" cy="6" r="6" fill="#a52a27"/><path d="M3.4 3.4L8.6 8.6M8.6 3.4L3.4 8.6" stroke="#fff" stroke-width="1.3" stroke-linecap="butt"/></svg>
<svg class="b" style="left:1241.6px;top:436.4px;" width="12.2" height="12.2" viewBox="0 0 12 12"><circle cx="6" cy="6" r="6" fill="#a52a27"/><path d="M3.4 3.4L8.6 8.6M8.6 3.4L3.4 8.6" stroke="#fff" stroke-width="1.3" stroke-linecap="butt"/></svg>
<svg class="b" style="left:1341.8px;top:438.2px;" width="12.5" height="9" viewBox="0 0 12.5 9"><path d="M1.5 4.6L4.6 7.6L11 1.5" fill="none" stroke="#3a8a2e" stroke-width="2.6" stroke-linejoin="miter" stroke-linecap="square"/></svg>
<svg class="b" style="left:1435.5px;top:436.4px;" width="12.2" height="12.2" viewBox="0 0 12 12"><circle cx="6" cy="6" r="6" fill="#a52a27"/><path d="M3.4 3.4L8.6 8.6M8.6 3.4L3.4 8.6" stroke="#fff" stroke-width="1.3" stroke-linecap="butt"/></svg>
<svg class="b" style="left:1609.0px;top:439.0px;" width="12.5" height="9" viewBox="0 0 12.5 9"><path d="M1.5 4.6L4.6 7.6L11 1.5" fill="none" stroke="#3a8a2e" stroke-width="2.6" stroke-linejoin="miter" stroke-linecap="square"/></svg>
<div class="b" style="left:1484.0px;top:440.1px;width:22.5px;height:16.0px;background:linear-gradient(#fafafa,#e6e6e6);border:1px solid #c8c8c8;border-radius:3px;box-sizing:border-box"></div>
<svg class="b" style="left:1484.0px;top:440.1px;" width="22.5" height="16" viewBox="0 0 22.5 16"><path d="M6.5 9.5L11.25 5L16 9.5" fill="none" stroke="#2a2a2a" stroke-width="2.6"/></svg>
<div class="b" style="left:1510.9px;top:440.1px;width:22.5px;height:16.0px;background:linear-gradient(#fafafa,#e6e6e6);border:1px solid #c8c8c8;border-radius:3px;box-sizing:border-box"></div>
<svg class="b" style="left:1510.9px;top:440.1px;" width="22.5" height="16" viewBox="0 0 22.5 16"><path d="M6.5 6L11.25 10.5L16 6" fill="none" stroke="#2a2a2a" stroke-width="2.6"/></svg>
<div class="b" style="left:1538.1px;top:435.0px;width:29.5px;height:24.0px;background:#fff;border:1px solid #d0d0d0;border-radius:3px;box-sizing:border-box"></div>
<div class="t" style="left:1252.8px;width:600px;text-align:center;top:443.0px;font-size:11.5px;color:#555;">4</div>
<div class="b" style="left:6.0px;top:467.0px;width:1654.0px;height:41.0px;background:#f9f9f9;border-top:1px solid #e3e3e3;box-sizing:border-box"></div>
<div class="t" style="left:-274.2px;width:600px;text-align:center;top:478.0px;font-size:12px;color:#333;">5</div>
<div class="b" style="left:62.0px;top:480.6px;width:12.0px;height:12.0px;border:1px solid #8f8f8f;background:linear-gradient(#f0f0f0,#dcdcdc);box-sizing:border-box;box-shadow:inset 0 0 0 1px #fafafa"></div>
<svg class="b" style="left:95.0px;top:477.6px;" width="12.5" height="12.5" viewBox="0 0 12 12"><path d="M0.5 11.5L1.3 8.3L7.4 2.2L9.8 4.6L3.7 10.7Z" fill="#2d6fb0"/><path d="M8.1 1.5L9.4 0.2L11.8 2.6L10.5 3.9Z" fill="#2d6fb0"/></svg>
<div class="t" style="left:143.0px;top:479.0px;font-size:11.2px;color:#3a7cbd;">shipped</div>
<svg class="b" style="left:689.9px;top:481.2px;" width="11" height="11" viewBox="0 0 11 11"><circle cx="5.5" cy="5.5" r="5" fill="url(#rg)" stroke="#9c9c9c" stroke-width="1"/></svg>
<svg class="b" style="left:747.0px;top:481.2px;" width="11" height="11" viewBox="0 0 11 11"><circle cx="5.5" cy="5.5" r="5" fill="url(#rg)" stroke="#9c9c9c" stroke-width="1"/></svg>
<svg class="b" style="left:809.7px;top:476.7px;" width="12.2" height="12.2" viewBox="0 0 12 12"><circle cx="6" cy="6" r="6" fill="#a52a27"/><path d="M3.4 3.4L8.6 8.6M8.6 3.4L3.4 8.6" stroke="#fff" stroke-width="1.3" stroke-linecap="butt"/></svg>
<svg class="b" style="left:890.0px;top:478.5px;" width="12.5" height="9" viewBox="0 0 12.5 9"><path d="M1.5 4.6L4.6 7.6L11 1.5" fill="none" stroke="#3a8a2e" stroke-width="2.6" stroke-linejoin="miter" stroke-linecap="square"/></svg>
<svg class="b" style="left:972.0px;top:476.7px;" width="12.2" height="12.2" viewBox="0 0 12 12"><circle cx="6" cy="6" r="6" fill="#a52a27"/><path d="M3.4 3.4L8.6 8.6M8.6 3.4L3.4 8.6" stroke="#fff" stroke-width="1.3" stroke-linecap="butt"/></svg>
<svg class="b" style="left:1035.6px;top:476.7px;" width="12.2" height="12.2" viewBox="0 0 12 12"><circle cx="6" cy="6" r="6" fill="#a52a27"/><path d="M3.4 3.4L8.6 8.6M8.6 3.4L3.4 8.6" stroke="#fff" stroke-width="1.3" stroke-linecap="butt"/></svg>
<svg class="b" style="left:1106.4px;top:476.7px;" width="12.2" height="12.2" viewBox="0 0 12 12"><circle cx="6" cy="6" r="6" fill="#a52a27"/><path d="M3.4 3.4L8.6 8.6M8.6 3.4L3.4 8.6" stroke="#fff" stroke-width="1.3" stroke-linecap="butt"/></svg>
<svg class="b" style="left:1171.7px;top:476.7px;" width="12.2" height="12.2" viewBox="0 0 12 12"><circle cx="6" cy="6" r="6" fill="#a52a27"/><path d="M3.4 3.4L8.6 8.6M8.6 3.4L3.4 8.6" stroke="#fff" stroke-width="1.3" stroke-linecap="butt"/></svg>
<svg class="b" style="left:1241.5px;top:478.5px;" width="12.5" height="9" viewBox="0 0 12.5 9"><path d="M1.5 4.6L4.6 7.6L11 1.5" fill="none" stroke="#3a8a2e" stroke-width="2.6" stroke-linejoin="miter" stroke-linecap="square"/></svg>
<svg class="b" style="left:1341.8px;top:478.5px;" width="12.5" height="9" viewBox="0 0 12.5 9"><path d="M1.5 4.6L4.6 7.6L11 1.5" fill="none" stroke="#3a8a2e" stroke-width="2.6" stroke-linejoin="miter" stroke-linecap="square"/></svg>
<svg class="b" style="left:1435.5px;top:476.7px;" width="12.2" height="12.2" viewBox="0 0 12 12"><circle cx="6" cy="6" r="6" fill="#a52a27"/><path d="M3.4 3.4L8.6 8.6M8.6 3.4L3.4 8.6" stroke="#fff" stroke-width="1.3" stroke-linecap="butt"/></svg>
<svg class="b" style="left:1609.0px;top:479.3px;" width="12.5" height="9" viewBox="0 0 12.5 9"><path d="M1.5 4.6L4.6 7.6L11 1.5" fill="none" stroke="#3a8a2e" stroke-width="2.6" stroke-linejoin="miter" stroke-linecap="square"/></svg>
<div class="b" style="left:1484.0px;top:480.4px;width:22.5px;height:16.0px;background:linear-gradient(#fafafa,#e6e6e6);border:1px solid #c8c8c8;border-radius:3px;box-sizing:border-box"></div>
<svg class="b" style="left:1484.0px;top:480.4px;" width="22.5" height="16" viewBox="0 0 22.5 16"><path d="M6.5 9.5L11.25 5L16 9.5" fill="none" stroke="#2a2a2a" stroke-width="2.6"/></svg>
<div class="b" style="left:1517.3px;top:475.8px;width:29.5px;height:24.0px;background:#fff;border:1px solid #d0d0d0;border-radius:3px;box-sizing:border-box"></div>
<div class="t" style="left:1232.0px;width:600px;text-align:center;top:484.0px;font-size:11.5px;color:#555;">5</div>
<div class="b" style="left:6.0px;top:508.0px;width:1654.0px;height:40.0px;background:#fff;border-top:1px solid #e3e3e3;box-sizing:border-box"></div>
<div class="t" style="left:-274.2px;width:600px;text-align:center;top:518.0px;font-size:12px;color:#333;">6</div>
<div class="b" style="left:62.0px;top:521.0px;width:12.0px;height:12.0px;border:1px solid #8f8f8f;background:linear-gradient(#f0f0f0,#dcdcdc);box-sizing:border-box;box-shadow:inset 0 0 0 1px #fafafa"></div>
<svg class="b" style="left:95.0px;top:518.0px;" width="12.5" height="12.5" viewBox="0 0 12 12"><path d="M0.5 11.5L1.3 8.3L7.4 2.2L9.8 4.6L3.7 10.7Z" fill="#2d6fb0"/><path d="M8.1 1.5L9.4 0.2L11.8 2.6L10.5 3.9Z" fill="#2d6fb0"/></svg>
<div class="t" style="left:143.0px;top:519.0px;font-size:11.2px;color:#3a7cbd;">en attente</div>
<svg class="b" style="left:689.9px;top:521.6px;" width="11" height="11" viewBox="0 0 11 11"><circle cx="5.5" cy="5.5" r="5" fill="url(#rg)" stroke="#9c9c9c" stroke-width="1"/></svg>
<svg class="b" style="left:747.0px;top:521.6px;" width="11" height="11" viewBox="0 0 11 11"><circle cx="5.5" cy="5.5" r="5" fill="url(#rg)" stroke="#9c9c9c" stroke-width="1"/></svg>
<svg class="b" style="left:809.7px;top:517.1px;" width="12.2" height="12.2" viewBox="0 0 12 12"><circle cx="6" cy="6" r="6" fill="#a52a27"/><path d="M3.4 3.4L8.6 8.6M8.6 3.4L3.4 8.6" stroke="#fff" stroke-width="1.3" stroke-linecap="butt"/></svg>
<svg class="b" style="left:890.1px;top:517.1px;" width="12.2" height="12.2" viewBox="0 0 12 12"><circle cx="6" cy="6" r="6" fill="#a52a27"/><path d="M3.4 3.4L8.6 8.6M8.6 3.4L3.4 8.6" stroke="#fff" stroke-width="1.3" stroke-linecap="butt"/></svg>
<svg class="b" style="left:972.0px;top:517.1px;" width="12.2" height="12.2" viewBox="0 0 12 12"><circle cx="6" cy="6" r="6" fill="#a52a27"/><path d="M3.4 3.4L8.6 8.6M8.6 3.4L3.4 8.6" stroke="#fff" stroke-width="1.3" stroke-linecap="butt"/></svg>
<svg class="b" style="left:1035.6px;top:517.1px;" width="12.2" height="12.2" viewBox="0 0 12 12"><circle cx="6" cy="6" r="6" fill="#a52a27"/><path d="M3.4 3.4L8.6 8.6M8.6 3.4L3.4 8.6" stroke="#fff" stroke-width="1.3" stroke-linecap="butt"/></svg>
<svg class="b" style="left:1106.2px;top:518.9px;" width="12.5" height="9" viewBox="0 0 12.5 9"><path d="M1.5 4.6L4.6 7.6L11 1.5" fill="none" stroke="#3a8a2e" stroke-width="2.6" stroke-linejoin="miter" stroke-linecap="square"/></svg>
<svg class="b" style="left:1171.7px;top:517.1px;" width="12.2" height="12.2" viewBox="0 0 12 12"><circle cx="6" cy="6" r="6" fill="#a52a27"/><path d="M3.4 3.4L8.6 8.6M8.6 3.4L3.4 8.6" stroke="#fff" stroke-width="1.3" stroke-linecap="butt"/></svg>
<svg class="b" style="left:1241.6px;top:517.1px;" width="12.2" height="12.2" viewBox="0 0 12 12"><circle cx="6" cy="6" r="6" fill="#a52a27"/><path d="M3.4 3.4L8.6 8.6M8.6 3.4L3.4 8.6" stroke="#fff" stroke-width="1.3" stroke-linecap="butt"/></svg>
<svg class="b" style="left:1341.9px;top:517.1px;" width="12.2" height="12.2" viewBox="0 0 12 12"><circle cx="6" cy="6" r="6" fill="#a52a27"/><path d="M3.4 3.4L8.6 8.6M8.6 3.4L3.4 8.6" stroke="#fff" stroke-width="1.3" stroke-linecap="butt"/></svg>
<svg class="b" style="left:1435.5px;top:517.1px;" width="12.2" height="12.2" viewBox="0 0 12 12"><circle cx="6" cy="6" r="6" fill="#a52a27"/><path d="M3.4 3.4L8.6 8.6M8.6 3.4L3.4 8.6" stroke="#fff" stroke-width="1.3" stroke-linecap="butt"/></svg>
<svg class="b" style="left:1609.0px;top:519.7px;" width="12.5" height="9" viewBox="0 0 12.5 9"><path d="M1.5 4.6L4.6 7.6L11 1.5" fill="none" stroke="#3a8a2e" stroke-width="2.6" stroke-linejoin="miter" stroke-linecap="square"/></svg>
<div class="b" style="left:1496.5px;top:516.2px;width:29.5px;height:24.0px;background:#fff;border:1px solid #d0d0d0;border-radius:3px;box-sizing:border-box"></div>
<div class="t" style="left:1211.2px;width:600px;text-align:center;top:524.0px;font-size:11.5px;color:#555;">1</div>
<div class="b" style="left:6.0px;top:548.0px;width:1654.0px;height:1.0px;background:#e3e3e3"></div>
<div class="t" style="left:12.8px;top:561.0px;font-size:11.6px;color:#333;letter-spacing:-0.286px;">Afficher #</div>
<div class="b" style="left:60.7px;top:556.4px;width:62.3px;height:24.0px;background:#fff;border:1px solid #d2d2d2;border-radius:3px;box-sizing:border-box"></div>
<div class="b" style="left:97.4px;top:557.4px;width:24.6px;height:22.0px;background:linear-gradient(#f6f6f6,#ececec);border-left:1px solid #d2d2d2"></div>
<div class="t" style="left:67.6px;top:563.0px;font-size:11.71px;color:#555;">20</div>
<svg class="b" style="left:106.5px;top:567.5px;" width="6" height="3.5" viewBox="0 0 6 3.5"><path d="M0 0H6L3 3.5Z" fill="#333"/></svg>
<div class="t" style="left:12.8px;top:583.0px;font-size:11.6px;color:#333;letter-spacing:-0.149px;">Résultats 1 à 6 sur 6</div>
<div class="b" style="left:13.0px;top:636.7px;width:1625.0px;height:151.8px;border:1px solid #dcdcdc;border-right:none;box-sizing:border-box"></div>
<div class="b" style="left:28.0px;top:625.0px;width:83.0px;height:20.0px;background:#fff"></div>
<div class="b" style="left:28px;top:632px;width:90px;height:20px;overflow:hidden"><div class="t" style="left:3.6px;top:-3.4px;font-size:17px;color:#333">H&#305;stor&#305;que</div></div>
<div class="b" style="left:29.0px;top:657.1px;width:1609.0px;height:21.9px;background:#dddddd"></div>
<div class="t" style="left:80.5px;top:662.0px;font-size:11.5px;color:#555;font-weight:bold;letter-spacing:-0.230px;">Type</div>
<div class="t" style="left:211.3px;top:662.0px;font-size:11.5px;color:#555;font-weight:bold;letter-spacing:0.194px;">Statut de commande</div>
<div class="t" style="left:573.0px;top:662.0px;font-size:11.5px;color:#555;font-weight:bold;letter-spacing:-0.070px;">Raison</div>
<div class="t" style="left:1026.5px;top:662.0px;font-size:11.5px;color:#555;font-weight:bold;letter-spacing:0.173px;">Utilisateur / IP</div>
<div class="t" style="left:1411.0px;top:662.0px;font-size:11.5px;color:#555;font-weight:bold;letter-spacing:0.482px;">Date</div>
<div class="t" style="left:1553.0px;top:662.0px;font-size:11.5px;color:#555;font-weight:bold;letter-spacing:0.088px;">Informations</div>
<div class="b" style="left:29.0px;top:679.0px;width:1609.0px;height:25.4px;background:#f7f7f7;border-top:1px solid #e4e4e4;box-sizing:border-box"></div>
<div class="t" style="left:33.4px;top:687.0px;font-size:11.4px;color:#555;letter-spacing:-0.011px;">modification</div>
<div class="t" style="left:162.0px;top:687.0px;font-size:11.4px;color:#555;letter-spacing:-0.215px;">envoyée</div>
<div class="b" style="left:800.0px;top:686.0px;width:121.7px;height:13.4px;background:#fff;border:1px solid #c9b8a8;box-sizing:border-box"></div>
<div class="t" style="left:1334.5px;top:687.0px;font-size:11.4px;color:#555;letter-spacing:0.243px;">2019-11-14 18:57</div>
<div class="b" style="left:29.0px;top:704.4px;width:1609.0px;height:26.2px;background:#fff;border-top:1px solid #e4e4e4;box-sizing:border-box"></div>
<div class="t" style="left:33.4px;top:713.0px;font-size:11.4px;color:#555;letter-spacing:0.014px;">payment</div>
<div class="t" style="left:162.0px;top:713.0px;font-size:11.4px;color:#555;letter-spacing:-0.093px;">confirmée</div>
<div class="t" style="left:386.2px;top:713.0px;font-size:11.4px;color:#555;letter-spacing:-0.025px;">Notification automatique de paiement reçue</div>
<div class="b" style="left:800.0px;top:707.4px;width:97.6px;height:17.8px;background:#fff;border:1px solid #c9b8a8;box-sizing:border-box"></div>
<div class="t" style="left:1334.5px;top:713.0px;font-size:11.4px;color:#555;letter-spacing:0.243px;">2019-11-14 08:26</div>
<div class="t" style="left:1522.7px;top:713.0px;font-size:11.4px;color:#555;letter-spacing:0.156px;">845254</div>
<div class="b" style="left:29.0px;top:730.6px;width:1609.0px;height:25.4px;background:#f7f7f7;border-top:1px solid #e4e4e4;box-sizing:border-box"></div>
<div class="t" style="left:33.4px;top:738.0px;font-size:11.4px;color:#555;letter-spacing:-0.083px;">creation</div>
<div class="t" style="left:162.0px;top:738.0px;font-size:11.4px;color:#555;letter-spacing:-0.175px;">créée</div>
<div class="t" style="left:386.2px;top:738.0px;font-size:11.4px;color:#555;letter-spacing:0.028px;">Commande créée</div>
<div class="b" style="left:800.0px;top:738.1px;width:294.2px;height:15.6px;background:#fff;border:1px solid #c9b8a8;box-sizing:border-box"></div>
<div class="t" style="left:1334.5px;top:738.0px;font-size:11.4px;color:#555;letter-spacing:0.243px;">2019-11-14 08:22</div>
<div class="b" style="left:13.0px;top:787.5px;width:1625.0px;height:1.0px;background:#dcdcdc"></div>
<div class="t" style="left:6.3px;top:817.0px;font-size:19.61px;color:#2f87c3;font-weight:bold;">Your subscription</div>
<div class="b" style="left:6.0px;top:842.0px;width:688.0px;height:1.0px;background:#e8e8e8"></div>
<svg class="b" style="left:58.3px;top:871.1px;" width="16.9" height="16.6" viewBox="0 0 16 16"><circle cx="8" cy="8" r="8" fill="#2f87c3"/><path d="M6.1 2.7L12 8L6.1 13.3Z" fill="#fff"/></svg>
<div class="t" style="left:82.2px;top:874.0px;font-size:16.04px;color:#2f87c3;font-weight:bold;">HIKASHOP BUSINESS</div>
<div class="b" style="left:133.0px;top:901.3px;width:374.2px;height:33.5px;border:2px solid #e3e3e3;box-sizing:border-box;background:#fff"></div>
<svg class="b" style="left:130px;top:900px" width="40" height="36" viewBox="0 0 40 36"><g fill="none" stroke="#2f87c3" stroke-width="2.8" stroke-linecap="round"><path d="M14.5 6V18"/><path d="M7.5 10.5L14.5 18"/><path d="M22.5 9L14.5 18"/><path d="M5.5 20.5Q10 18.5 14.5 18"/><path d="M6.5 27Q12 25.5 14.5 18"/></g><circle cx="15.5" cy="17" r="3" fill="#2f87c3"/><path d="M19.6 12.8H24.4V21.7H30.6L22.3 30.6L14 21.7H19.6Z" fill="none" stroke="#2f87c3" stroke-width="1.3" stroke-linejoin="miter"/></svg>
<div class="t" style="left:170.8px;top:913.0px;font-size:10.67px;color:#111;font-weight:bold;">Download the latest stable version (4.2.2) of HikaShop Business</div>
<div class="b" style="left:539.8px;top:910.2px;width:76.8px;height:15.3px;border:1px solid #dedede;box-sizing:border-box;background:#fafafa"></div>
<div class="b" style="left:625.3px;top:910.2px;width:64.5px;height:15.3px;border:1px solid #dedede;box-sizing:border-box;background:#fafafa"></div>
<div class="t" style="left:535.5px;top:913.0px;font-size:10.5px;color:#999;">(</div>
<div class="t" style="left:619.5px;top:913.0px;font-size:10.5px;color:#aaa;">|</div>
<div class="t" style="left:690.8px;top:913.0px;font-size:10.5px;color:#999;">)</div>
<div class="t" style="left:540.9px;top:913.0px;font-size:10.75px;color:#111;font-weight:bold;">tar.gz package</div>
<div class="t" style="left:627.3px;top:913.0px;font-size:10.85px;color:#111;font-weight:bold;">zip package</div>
<svg class="b" style="left:141.0px;top:954.3px;" width="10.5" height="10.5" viewBox="0 0 10 10"><circle cx="5" cy="5" r="5" fill="#2f87c3"/></svg>
<div class="t" style="left:158.2px;top:955.0px;font-size:10.62px;color:#444;letter-spacing:0">Subscription attached to</div>
<div class="b" style="left:274.6px;top:944.6px;width:197.1px;height:25.4px;border:1px solid #dddddd;box-sizing:border-box;background:#fff"></div>
<div class="b" style="left:277.0px;top:951.1px;width:69.9px;height:18.1px;border:1px solid #c8b09a;box-sizing:border-box;background:#fff"></div>
<div class="b" style="left:473.1px;top:943.8px;width:46.9px;height:26.3px;border:2px solid #2f84c4;box-sizing:border-box;background:#fff"></div>
<div class="t" style="left:485.0px;top:953.0px;font-size:10.22px;color:#7097c0;">Save</div>
<svg class="b" style="left:217.2px;top:988.3px;" width="10.4" height="10.4" viewBox="0 0 10 10"><circle cx="5" cy="5" r="5" fill="#2f87c3"/></svg>
<div class="t" style="left:234.1px;top:990.0px;font-size:10.47px;color:#444;">Subscription valid until 23 June 2021</div>
<div class="t" style="left:233.6px;top:1006.0px;font-size:10.75px;color:#2f87c3;font-weight:bold;">Extend it to 23 June 2022 for <s style="color:#e8202a">99,90 €</s> 60 €</div>
<div class="t" style="left:233.6px;top:1021.0px;font-size:10.75px;color:#2f87c3;font-weight:bold;">Extend it to 23 June 2023 for <s style="color:#e8202a">199,80 €</s> 110 €</div>
<div class="b" style="left:207.8px;top:1044.2px;width:119.3px;height:24.5px;background:#2f87c3"></div>
<div class="t" style="left:219.6px;top:1051.0px;font-size:10.65px;color:#fff;">Add another website</div>
<div class="b" style="left:81.5px;top:1077.5px;width:612.5px;height:2.5px;background:#d8d8d8"></div>
</body></html>
